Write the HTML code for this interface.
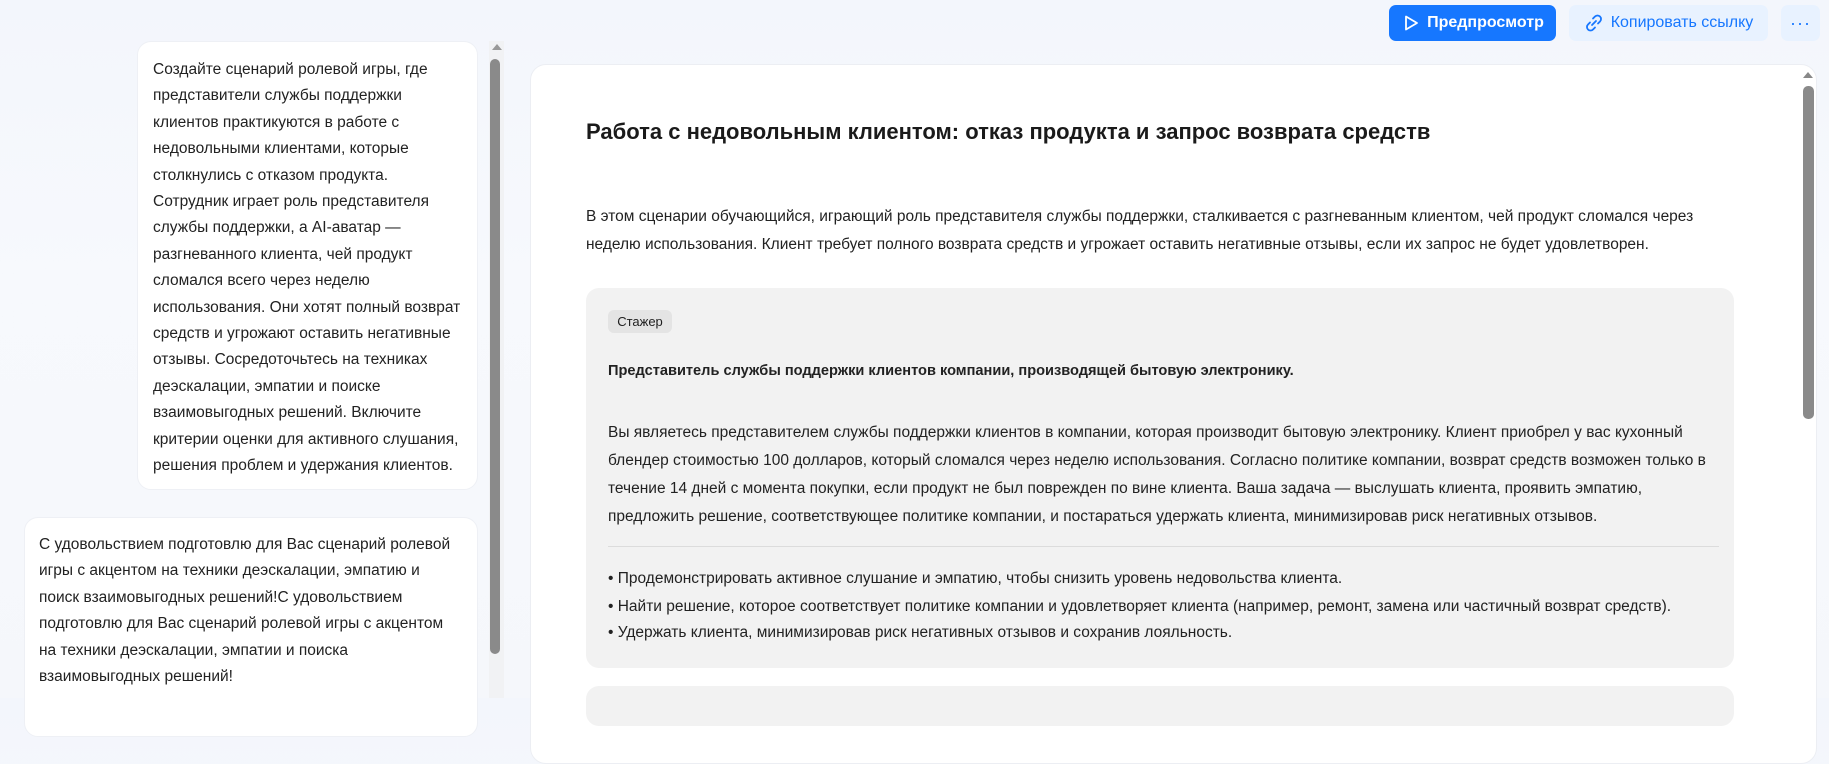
<!DOCTYPE html>
<html><head><meta charset="utf-8"><style>
*{box-sizing:border-box;margin:0;padding:0}
body{width:1829px;height:698px;overflow:hidden;position:relative;font-family:"Liberation Sans",sans-serif;color:#1f1f1f;background:linear-gradient(180deg,#f3f6fc 0%,#f7f9fd 40%,#f5f7fb 100%)}
.abs{position:absolute}
.btn{position:absolute;top:5px;height:36px;border-radius:7px;display:flex;align-items:center;justify-content:center;font-size:16px}
.bubble{position:absolute;background:#fff;border-radius:14px;border:1px solid #eef0f5;font-size:15.5px;line-height:26.4px;color:#222;white-space:nowrap}
.card{position:absolute;left:530px;top:64px;width:1287px;height:700px;background:#fff;border-radius:16px;border:1px solid #eceef3}
.t{position:absolute;font-size:15.5px;color:#222;white-space:nowrap}
</style></head><body>
<div class="btn" style="left:1389px;width:167px;background:#1677ff;color:#fff;font-weight:bold">
<svg width="20" height="20" viewBox="0 0 20 20" style="margin-right:6px"><path d="M5 3.5 L16 10 L5 16.5 Z" fill="none" stroke="#fff" stroke-width="1.8" stroke-linejoin="round"/></svg>Предпросмотр</div>
<div class="btn" style="left:1569px;width:199px;background:#e8f2ff;color:#1677ff">
<svg width="20" height="20" viewBox="0 0 20 20" style="margin-right:7px"><path d="M8 12 L12 8 M9 5.5 L11 3.5 a3 3 0 0 1 5 5 L14 10.5 M11 14.5 L9 16.5 a3 3 0 0 1 -5 -5 L6 9.5" fill="none" stroke="#1677ff" stroke-width="1.8" stroke-linecap="round"/></svg>Копировать ссылку</div>
<div class="btn" style="left:1781px;width:39px;background:#e8f2ff;color:#1677ff;font-size:18px;letter-spacing:1px">···</div>

<div class="abs" style="left:489px;top:41px;width:15px;height:657px;background:#f1f2f4"></div>
<div class="abs" style="left:492px;top:44px;width:0;height:0;border-left:5px solid transparent;border-right:5px solid transparent;border-bottom:6px solid #999"></div>
<div class="abs" style="left:490px;top:59px;width:10px;height:595px;background:#8a8a8a;border-radius:5px"></div>

<div class="bubble" style="left:137px;top:41px;width:341px;height:449px;padding:15px 15px">Создайте сценарий ролевой игры, где<br>представители службы поддержки<br>клиентов практикуются в работе с<br>недовольными клиентами, которые<br>столкнулись с отказом продукта.<br>Сотрудник играет роль представителя<br>службы поддержки, а AI-аватар —<br>разгневанного клиента, чей продукт<br>сломался всего через неделю<br>использования. Они хотят полный возврат<br>средств и угрожают оставить негативные<br>отзывы. Сосредоточьтесь на техниках<br>деэскалации, эмпатии и поиске<br>взаимовыгодных решений. Включите<br>критерии оценки для активного слушания,<br>решения проблем и удержания клиентов.</div>
<div class="bubble" style="left:24px;top:517px;width:454px;height:220px;padding:14px 14px">С удовольствием подготовлю для Вас сценарий ролевой<br>игры с акцентом на техники деэскалации, эмпатию и<br>поиск взаимовыгодных решений!С удовольствием<br>подготовлю для Вас сценарий ролевой игры с акцентом<br>на техники деэскалации, эмпатии и поиска<br>взаимовыгодных решений!</div>

<div class="card"></div>
<div class="abs" style="left:1803px;top:72px;width:0;height:0;border-left:5px solid transparent;border-right:5px solid transparent;border-bottom:6px solid #888"></div>
<div class="abs" style="left:1803px;top:86px;width:11px;height:333px;background:#8a8a8a;border-radius:5px"></div>

<div class="t" style="left:586px;top:119px;font-size:22px;font-weight:bold;color:#1a1a1a">Работа с недовольным клиентом: отказ продукта и запрос возврата средств</div>
<div class="t" style="left:586px;top:208px">В этом сценарии обучающийся, играющий роль представителя службы поддержки, сталкивается с разгневанным клиентом, чей продукт сломался через</div>
<div class="t" style="left:586px;top:236px">неделю использования. Клиент требует полного возврата средств и угрожает оставить негативные отзывы, если их запрос не будет удовлетворен.</div>

<div class="abs" style="left:586px;top:288px;width:1148px;height:380px;background:#f2f2f2;border-radius:13px"></div>
<div class="abs" style="left:608px;top:310px;width:64px;height:23px;background:#e4e4e4;border-radius:6px;font-size:13px;line-height:23px;text-align:center">Стажер</div>
<div class="t" style="left:608px;top:363px;font-weight:bold;font-size:14.6px">Представитель службы поддержки клиентов компании, производящей бытовую электронику.</div>
<div class="t" style="left:608px;top:424px">Вы являетесь представителем службы поддержки клиентов в компании, которая производит бытовую электронику. Клиент приобрел у вас кухонный</div>
<div class="t" style="left:608px;top:452px">блендер стоимостью 100 долларов, который сломался через неделю использования. Согласно политике компании, возврат средств возможен только в</div>
<div class="t" style="left:608px;top:480px">течение 14 дней с момента покупки, если продукт не был поврежден по вине клиента. Ваша задача — выслушать клиента, проявить эмпатию,</div>
<div class="t" style="left:608px;top:508px">предложить решение, соответствующее политике компании, и постараться удержать клиента, минимизировав риск негативных отзывов.</div>
<div class="abs" style="left:608px;top:546px;width:1111px;height:1px;background:#dcdcdc"></div>
<div class="t" style="left:608px;top:570px">• Продемонстрировать активное слушание и эмпатию, чтобы снизить уровень недовольства клиента.</div>
<div class="t" style="left:608px;top:598px">• Найти решение, которое соответствует политике компании и удовлетворяет клиента (например, ремонт, замена или частичный возврат средств).</div>
<div class="t" style="left:608px;top:624px">• Удержать клиента, минимизировав риск негативных отзывов и сохранив лояльность.</div>
<div class="abs" style="left:586px;top:686px;width:1148px;height:40px;background:#f2f2f2;border-radius:13px"></div>
</body></html>
